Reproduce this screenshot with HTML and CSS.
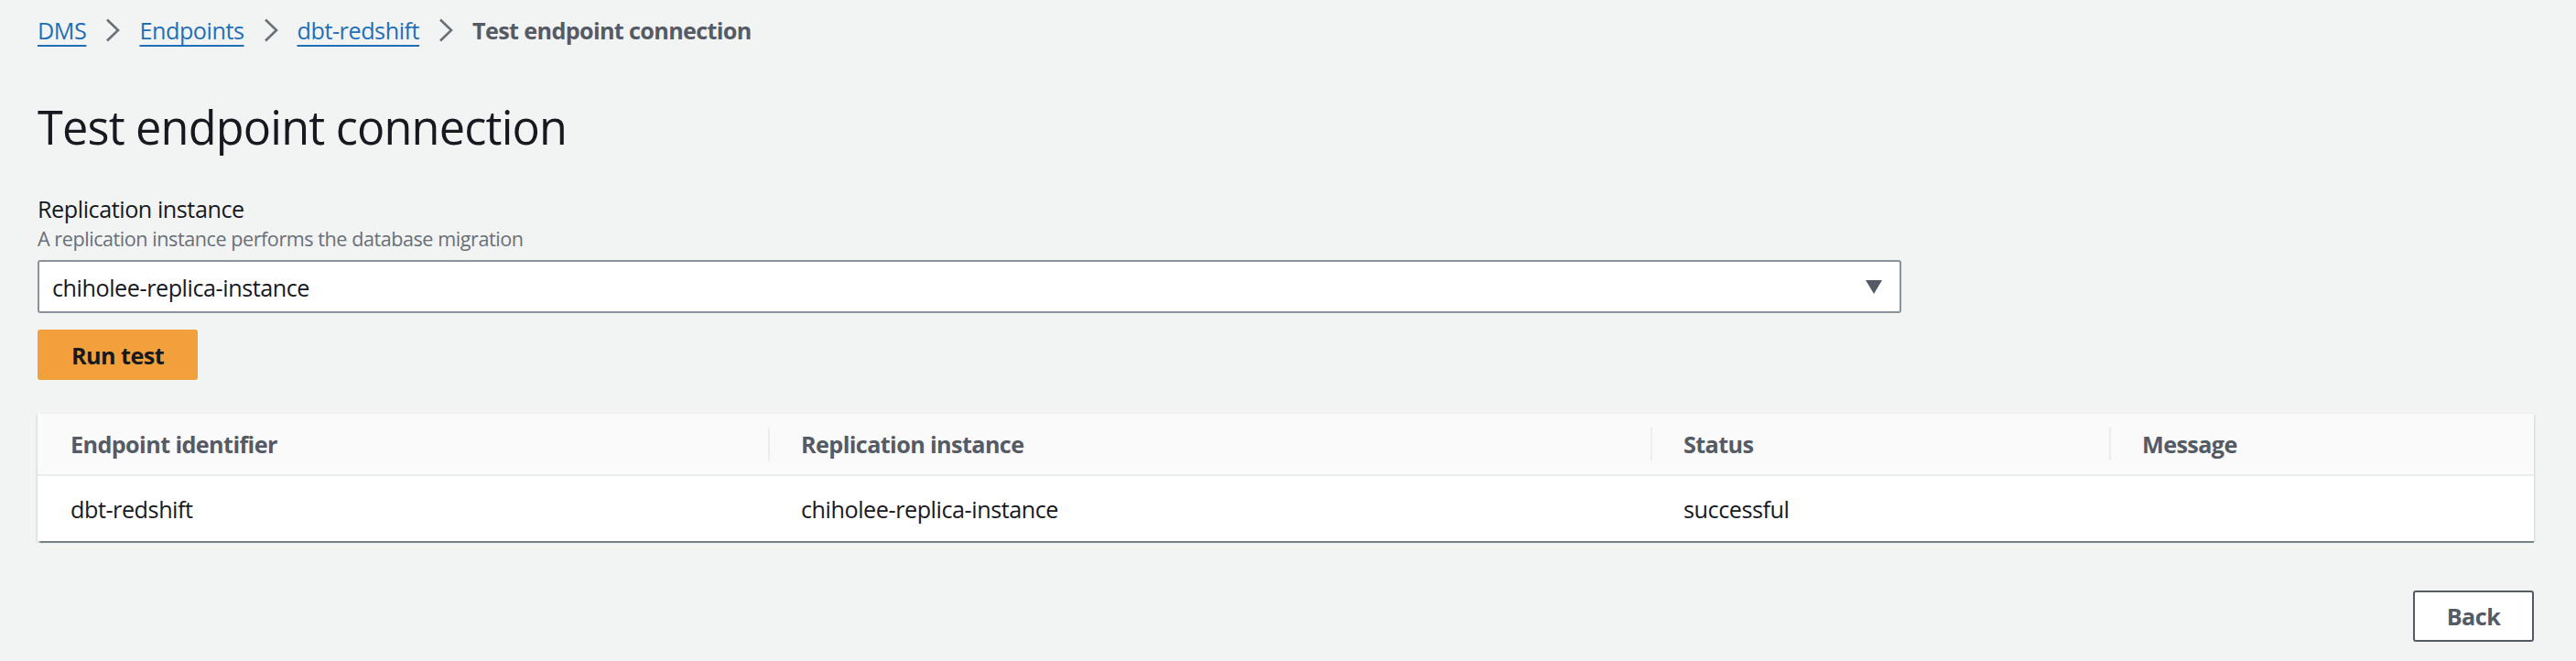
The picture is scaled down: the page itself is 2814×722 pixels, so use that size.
FILE: index.html
```html
<!DOCTYPE html>
<html lang="en">
<head>
<meta charset="utf-8">
<title>Test endpoint connection</title>
<link rel="stylesheet" href="styles.css">
</head>
<body>
<main class="page">
  <nav class="breadcrumbs">
    <a class="crumb-link" href="#">DMS</a>
    <svg class="crumb-sep" viewBox="0 0 16 26" width="16" height="26"><polyline points="2,1.5 14,13 2,24.5" fill="none" stroke="#687078" stroke-width="2.6"/></svg>
    <a class="crumb-link" href="#">Endpoints</a>
    <svg class="crumb-sep" viewBox="0 0 16 26" width="16" height="26"><polyline points="2,1.5 14,13 2,24.5" fill="none" stroke="#687078" stroke-width="2.6"/></svg>
    <a class="crumb-link" href="#">dbt-redshift</a>
    <svg class="crumb-sep" viewBox="0 0 16 26" width="16" height="26"><polyline points="2,1.5 14,13 2,24.5" fill="none" stroke="#687078" stroke-width="2.6"/></svg>
    <span class="crumb-current">Test endpoint connection</span>
  </nav>

  <h1 class="title">Test endpoint connection</h1>

  <div class="field">
    <div class="field-label">Replication instance</div>
    <div class="field-desc">A replication instance performs the database migration</div>
    <div class="select">
      <span class="select-value">chiholee-replica-instance</span>
      <svg class="select-caret" viewBox="0 0 18 15" width="18" height="15"><polygon points="0,0 18,0 9,15" fill="#545b64"/></svg>
    </div>
  </div>

  <button class="btn btn-primary" type="button">Run test</button>

  <div class="table">
    <div class="row row-head">
      <div class="cell">Endpoint identifier</div>
      <div class="cell cell-sep">Replication instance</div>
      <div class="cell cell-sep">Status</div>
      <div class="cell cell-sep">Message</div>
    </div>
    <div class="row row-body">
      <div class="cell">dbt-redshift</div>
      <div class="cell">chiholee-replica-instance</div>
      <div class="cell">successful</div>
      <div class="cell"></div>
    </div>
  </div>

  <div class="actions">
    <button class="btn btn-normal" type="button">Back</button>
  </div>
</main>
</body>
</html>
```

FILE: styles.css
```css
html, body {
  margin: 0;
  padding: 0;
  background: #f2f3f3;
}

body {
  font-family: "Open Sans", "Noto Sans", sans-serif;
  font-size: 25.2px;
  color: #16191f;
  letter-spacing: -0.018em;
}

.page {
  display: flex;
  flex-direction: column;
  align-items: flex-start;
  padding: 15px 46px 0 41px;
}

.breadcrumbs {
  display: flex;
  align-items: center;
  gap: 21px;
  height: 36px;
  line-height: 36px;
}

.crumb-link {
  color: #1e6fb8;
  text-decoration: underline;
  text-decoration-thickness: 2px;
  text-underline-offset: 6px;
}

.crumb-sep {
  display: block;
}

.crumb-current {
  color: #545b64;
  font-weight: 700;
  letter-spacing: -0.026em;
}

.title {
  margin: 58px 0 0;
  font-size: 50.4px;
  line-height: 60px;
  font-weight: 400;
  letter-spacing: -0.016em;
  color: #16191f;
}

.field {
  margin-top: 41px;
  display: flex;
  flex-direction: column;
  align-self: stretch;
}

.field-label {
  line-height: 36px;
  color: #16191f;
}

.field-desc {
  font-size: 21.6px;
  line-height: 30px;
  color: #687078;
}

.select {
  margin-top: 8px;
  width: 2036px;
  height: 58px;
  box-sizing: border-box;
  background: #ffffff;
  border: 2px solid #8a939c;
  border-radius: 3px;
  display: flex;
  align-items: center;
  justify-content: space-between;
  padding: 0 19px 0 14px;
}

.select-value {
  line-height: 36px;
  padding-top: 2px;
}

.select-caret {
  display: block;
}

.btn {
  font-family: inherit;
  font-size: 25.2px;
  letter-spacing: -0.022em;
  font-weight: 700;
  line-height: 36px;
  cursor: pointer;
}

.btn-primary {
  margin-top: 18px;
  height: 55px;
  width: 175px;
  padding: 0;
  background: #f1a03b;
  color: #16191f;
  border: none;
  border-radius: 3px;
}

.table {
  margin-top: 37px;
  align-self: stretch;
  background: #ffffff;
  box-shadow: 0 2px 1px -0.5px rgba(0, 28, 36, 0.45),
              1px 1px 2px 0 rgba(0, 28, 36, 0.12),
              -1px 1px 2px 0 rgba(0, 28, 36, 0.12);
}

.row {
  display: grid;
  grid-template-columns: 798px 964px 501px 1fr;
  align-items: center;
}

.row-head {
  height: 68px;
  box-sizing: border-box;
  background: #fafafa;
  border-bottom: 2px solid #eaeded;
  color: #545b64;
  font-weight: 700;
  letter-spacing: -0.024em;
}

.row-body {
  height: 71px;
}

.cell {
  position: relative;
  padding-left: 36px;
  line-height: 36px;
  height: 36px;
}

.cell-sep::before {
  content: "";
  position: absolute;
  left: 0;
  top: 0;
  height: 36px;
  width: 2px;
  background: #eaeded;
}

.actions {
  margin-top: 54px;
  align-self: stretch;
  display: flex;
  justify-content: flex-end;
}

.btn-normal {
  height: 56px;
  width: 132px;
  padding: 0;
  background: #ffffff;
  color: #545b64;
  border: 2px solid #545b64;
  border-radius: 3px;
}
```
